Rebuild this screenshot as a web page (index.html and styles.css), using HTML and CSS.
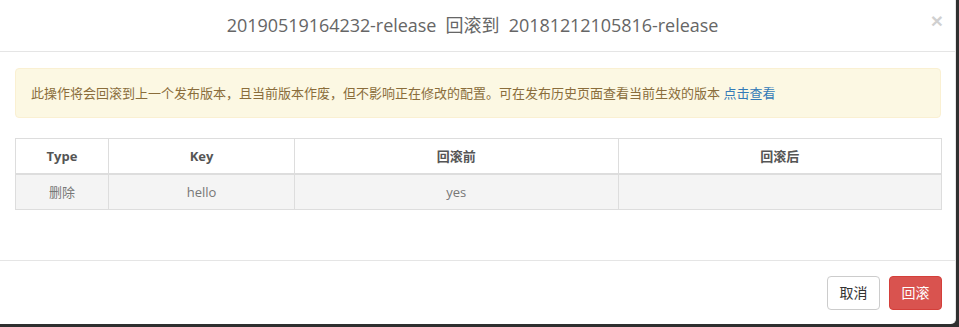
FILE: index.html
```html
<!DOCTYPE html>
<html lang="zh-CN">
<head>
<meta charset="utf-8">
<title>回滚</title>
<link rel="stylesheet" href="styles.css">
</head>
<body>
<div class="modal">
  <div class="modal-header">
    <h4 class="modal-title">20190519164232-release&nbsp; 回滚到&nbsp; 20181212105816-release</h4>
    <span class="close">&times;</span>
  </div>
  <div class="modal-body">
    <div class="alert">此操作将会回滚到上一个发布版本，且当前版本作废，但不影响正在修改的配置。可在发布历史页面查看当前生效的版本 <a class="link" href="#">点击查看</a></div>
    <table class="diff">
      <thead>
        <tr>
          <th class="c-type">Type</th>
          <th class="c-key">Key</th>
          <th class="c-val">回滚前</th>
          <th class="c-val">回滚后</th>
        </tr>
      </thead>
      <tbody>
        <tr>
          <td>删除</td>
          <td>hello</td>
          <td>yes</td>
          <td></td>
        </tr>
      </tbody>
    </table>
  </div>
  <div class="modal-footer">
    <button class="btn btn-default">取消</button>
    <button class="btn btn-danger">回滚</button>
  </div>
</div>
</body>
</html>
```

FILE: styles.css
```css
html, body {
  margin: 0;
  padding: 0;
}
body {
  background: #2f2f2f;
  width: 959px;
  height: 327px;
  overflow: hidden;
  font-family: "Open Sans", "Noto Sans CJK SC", sans-serif;
  font-size: 13px;
  color: #666;
}
.modal {
  width: 956px;
  height: 324px;
  background: #fff;
  border-radius: 0 0 5px 0;
  box-sizing: border-box;
  border-right: 1px solid #e6e6e6;
  display: flex;
  flex-direction: column;
}
.modal-header {
  position: relative;
  padding: 15px 25px 16px 15px;
  border-bottom: 1px solid #e5e5e5;
  text-align: center;
}
.modal-title {
  margin: 0;
  font-size: 18px;
  font-weight: 400;
  line-height: 20px;
  color: #666;
  letter-spacing: -0.05px;
}
.close {
  position: absolute;
  right: 12px;
  top: 10px;
  font-size: 21px;
  font-weight: 700;
  line-height: 21px;
  color: #000;
  opacity: 0.18;
  font-family: "Liberation Sans", sans-serif;
}
.modal-body {
  padding: 16px 14px 50px 15px;
  flex: 1;
}
.alert {
  padding: 14px 15px;
  line-height: 20px;
  background: #fcf8e3;
  border: 1px solid #faf0d2;
  border-radius: 4px;
  color: #8a6d3b;
  font-size: 13px;
  margin-bottom: 20px;
}
.link {
  color: #337ab7;
  text-decoration: none;
}
.diff {
  width: 927px;
  border-collapse: collapse;
  border: 1px solid #ddd;
  table-layout: fixed;
}
.diff th, .diff td {
  border: 1px solid #ddd;
  text-align: center;
  line-height: 20px;
  padding: 7px 8px;
  font-size: 13px;
}
.diff th {
  color: #555;
  font-weight: 700;
  border-bottom: 2px solid #ddd;
}
.diff td {
  color: #777;
  background: #f4f4f4;
}
.c-type { width: 76px; }
.c-key { width: 169px; }
.modal-footer {
  border-top: 1px solid #e5e5e5;
  padding: 15px 13px 14px 15px;
  display: flex;
  justify-content: flex-end;
  gap: 9px;
}
.btn {
  font-family: "Open Sans", "Noto Sans CJK SC", sans-serif;
  font-size: 14px;
  line-height: 20px;
  height: 34px;
  width: 53px;
  padding: 6px 10px;
  border-radius: 4px;
  border: 1px solid #ccc;
  background: #fff;
  color: #333;
}
.btn-danger {
  background: #d9534f;
  border-color: #d43f3a;
  color: #fff;
}
```
